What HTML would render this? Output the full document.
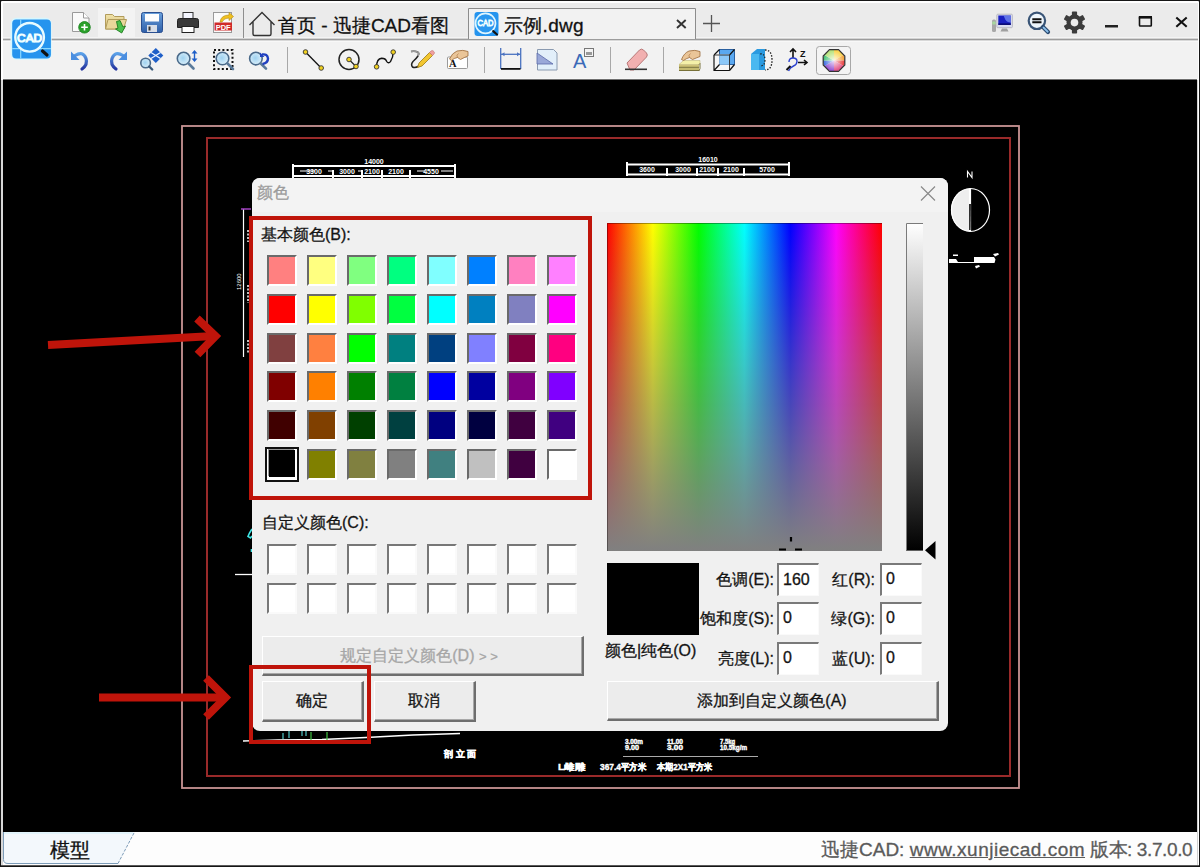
<!DOCTYPE html>
<html><head><meta charset="utf-8">
<style>
*{margin:0;padding:0;box-sizing:border-box}
html,body{width:1200px;height:867px;overflow:hidden;background:#161616;font-family:"Liberation Sans",sans-serif}
.a{position:absolute}
.t{position:absolute;white-space:nowrap;line-height:1;-webkit-text-stroke:0.3px currentColor}
.sw{position:absolute;width:30px;height:31px;border-style:solid;border-width:2px;border-color:#6a6a6a #fff #fff #6a6a6a}
.cs{position:absolute;width:30px;height:31px;background:#fff;border-style:solid;border-width:2px;border-color:#777 #fafafa #fafafa #777}
.btn{position:absolute;background:#ececec;border-style:solid;border-width:1px 2px 2px 1px;border-color:#fff #6e6e6e #6e6e6e #fff;box-shadow:inset -1px -1px 0 #a8a8a8}
.ed{position:absolute;width:41px;height:32px;background:#fff;border-style:solid;border-width:2px 1px 1px 2px;border-color:#7a7a7a #fafafa #fafafa #7a7a7a}
.dt{position:absolute;white-space:nowrap;line-height:1;font-size:16px;color:#141414;-webkit-text-stroke:0.3px currentColor}
</style></head><body>
<!-- window base -->
<div class="a" style="left:1px;top:1px;width:1198px;height:865px;background:#ffffff;border-radius:1px 1px 0 0"></div>
<div class="a" style="left:3px;top:3px;width:1195px;height:35px;background:#ebebeb;border-radius:0"></div>
<div class="a" style="left:3px;top:37px;width:1195px;height:1px;background:#f4f4f4"></div>
<div class="a" style="left:3px;top:38px;width:1195px;height:1px;background:#d4d4d4"></div>
<div class="a" style="left:3px;top:39px;width:1195px;height:1px;background:#9c9c9c"></div>
<div class="a" style="left:3px;top:40px;width:1195px;height:1px;background:#d8d8d8"></div>
<div class="a" style="left:3px;top:41px;width:1195px;height:1px;background:#f8f8f8"></div>
<div class="a" style="left:3px;top:42px;width:1195px;height:36px;background:#f2f2f2"></div>
<div class="a" style="left:3px;top:78px;width:1195px;height:1px;background:#f6f6f6"></div>
<div class="a" style="left:3px;top:79px;width:1194px;height:1px;background:#707070"></div>
<div class="a" style="left:3px;top:80px;width:1194px;height:752px;background:#000"></div>
<div class="a" style="left:1px;top:80px;width:2px;height:786px;background:#d8d8d8"></div>
<div class="a" style="left:1197px;top:80px;width:1px;height:786px;background:#cfcfcf"></div>
<div class="a" style="left:3px;top:832px;width:1194px;height:33px;background:#fdfdfd"></div>
<div class="a" style="left:1px;top:865px;width:1198px;height:1px;background:#5a5a5a"></div>
<svg class="a" style="left:0;top:0" width="1200" height="80" viewBox="0 0 1200 80">
<defs>
  <linearGradient id="gBlueArr" x1="0" y1="0" x2="0" y2="1"><stop offset="0" stop-color="#5aa0e8"/><stop offset="1" stop-color="#2536a0"/></linearGradient>
  <radialGradient id="gLens" cx="0.45" cy="0.45" r="0.6"><stop offset="0" stop-color="#9fd2f0"/><stop offset="1" stop-color="#dff1fb"/></radialGradient>
  <linearGradient id="gFolder" x1="0" y1="0" x2="0" y2="1"><stop offset="0" stop-color="#f0e2a8"/><stop offset="1" stop-color="#d9c17e"/></linearGradient>
  <linearGradient id="gSave" x1="0" y1="0" x2="0" y2="1"><stop offset="0" stop-color="#6aa0dc"/><stop offset="1" stop-color="#2f5fa8"/></linearGradient>
</defs>
<!-- folder hover bg -->
<rect x="98" y="8" width="37" height="29" fill="#f3f3f3"/>
<!-- new file -->
<path d="M72.5 12.5h11l5.5 5.5v13.5h-16.5z" fill="#fafafa" stroke="#9a9a9a" stroke-width="1"/>
<path d="M83.5 12.5v5.5h5.5" fill="#fff" stroke="#9a9a9a" stroke-width="1"/>
<circle cx="84.5" cy="27.3" r="5.8" fill="#2aa02a" stroke="#17801a" stroke-width="0.8"/>
<path d="M84.5 24v6.6M81.2 27.3h6.6" stroke="#fff" stroke-width="1.6"/>
<!-- open folder -->
<path d="M105.5 14.5h7l2 2h9.5v12.5h-18.5z" fill="url(#gFolder)" stroke="#b19b5b" stroke-width="1"/>
<path d="M108 19.5h18.5l-3 9.5h-18z" fill="#e9d79a" stroke="#b19b5b" stroke-width="1"/>
<path d="M116.5 21.5l3.5 -1l3 6.5l2.5 -1l-3.8 7l-6.2 -4l2.5 -0.8z" fill="#4cc04c" stroke="#1d7a1d" stroke-width="0.9"/>
<!-- save -->
<rect x="141.5" y="12.5" width="21" height="20" rx="2" fill="url(#gSave)" stroke="#2a4f90" stroke-width="1"/>
<rect x="145" y="14" width="14" height="7.5" fill="#fdfdfd"/>
<rect x="147" y="25" width="10" height="7" fill="#d8dee8"/>
<rect x="148.5" y="26.5" width="2" height="4" fill="#333"/>
<!-- print -->
<rect x="183" y="12.5" width="10" height="7" fill="#f4f6ff" stroke="#333" stroke-width="1"/>
<path d="M177.5 20.5q0-2 2-2h17q2 0 2 2v7h-21z" fill="#3a3a3a" stroke="#222" stroke-width="1"/>
<rect x="182" y="26.5" width="12" height="6" fill="#fff" stroke="#222" stroke-width="1"/>
<!-- pdf -->
<rect x="213.5" y="12.5" width="18" height="20" fill="#fbfbfb" stroke="#9a9a9a" stroke-width="1"/>
<rect x="214.5" y="22.5" width="17.5" height="8" fill="#d02a2a"/>
<text x="223.2" y="29.6" font-family="Liberation Sans" font-size="7.5" font-weight="bold" fill="#fff" text-anchor="middle">PDF</text>
<path d="M220 22q1-7 9-7v-2.5l4.5 4l-4.5 4v-2.5q-5 0-7 4z" fill="#f0c020" stroke="#b08a10" stroke-width="0.6"/>
<!-- separator -->
<rect x="243" y="8" width="1" height="30" fill="#8e8e8e"/>
<!-- home -->
<path d="M249.5 25L262 12.5L274.5 25M253 22v12q0 1.5 1.5 1.5h15q1.5 0 1.5-1.5v-12" fill="none" stroke="#333" stroke-width="1.4"/>
<!-- active tab -->
<path d="M468.5 39V8.5H695.5V39" fill="#f2f2f2" stroke="#8c8c8c" stroke-width="1"/>
<!-- tab close -->
<path d="M677 20l8.7 8M685.7 20l-8.7 8" stroke="#333" stroke-width="1.9"/>
<!-- plus -->
<path d="M711.5 15v17M703 23.5h17" stroke="#555" stroke-width="1.3"/>
<!-- right controls: monitor -->
<rect x="992" y="19.5" width="4" height="12.5" rx="1.5" fill="#a8a8a8"/>
<rect x="992.3" y="21.5" width="3.4" height="3" fill="#a8d8a0"/>
<rect x="996.8" y="14.2" width="15.6" height="13.5" rx="1" fill="#dadcf0" stroke="#b0b0b8" stroke-width="0.8"/>
<rect x="998.3" y="15.5" width="12.5" height="9.3" fill="#1a20c0"/>
<path d="M1003.5 15.5h7.3v7q-4 0-5.5-3z" fill="#7088f0" opacity="0.8"/>
<rect x="998.3" y="23.5" width="12.5" height="1.3" fill="#000060"/>
<path d="M1000.5 31.5h8l-1.5-3h-5z" fill="#a0a0a0"/>
<!-- search -->
<circle cx="1036.9" cy="20.8" r="8.2" fill="#eef6fc" stroke="#3a5577" stroke-width="2.2"/>
<path d="M1032.3 19.3h9.2M1032.3 22.3h9.2" stroke="#111" stroke-width="1.9"/>
<path d="M1043 27l5 5" stroke="#2a4a70" stroke-width="4.2" stroke-linecap="round"/>
<path d="M1043.6 27.6l4 4" stroke="#8cc0ec" stroke-width="2" stroke-linecap="round"/>
<!-- gear -->
<g transform="translate(1074.5,22.6)" fill="#3c3c3c">
  <circle r="8"/>
  <rect x="-2.6" y="-11" width="5.2" height="5" rx="0.8"/>
  <rect x="-2.6" y="6" width="5.2" height="5" rx="0.8" />
  <rect x="-2.6" y="-11" width="5.2" height="5" rx="0.8" transform="rotate(60)"/>
  <rect x="-2.6" y="-11" width="5.2" height="5" rx="0.8" transform="rotate(120)"/>
  <rect x="-2.6" y="-11" width="5.2" height="5" rx="0.8" transform="rotate(240)"/>
  <rect x="-2.6" y="-11" width="5.2" height="5" rx="0.8" transform="rotate(300)"/>
  <circle r="3.8" fill="#ececec"/>
</g>
<!-- min max close -->
<rect x="1105" y="25" width="13" height="2.5" fill="#222"/>
<rect x="1139.5" y="16.8" width="11.8" height="9.2" rx="0.8" fill="none" stroke="#111" stroke-width="1.6"/>
<rect x="1138.8" y="16" width="13.2" height="2.6" fill="#111"/>
<path d="M1176.3 17.5l10.4 9.2M1186.7 17.5l-10.4 9.2" stroke="#111" stroke-width="2.1"/>

<!-- ROW 2 -->
<!-- undo -->
<path d="M75 55.5q8-5 11 3q2 6-4 10.5" fill="none" stroke="url(#gBlueArr)" stroke-width="3.2" stroke-linecap="round"/>
<path d="M71 51.5v8.5h8.5z" fill="#4a8ee0"/>
<!-- redo -->
<path d="M123 55.5q-8-5-11 3q-2 6 4 10.5" fill="none" stroke="url(#gBlueArr)" stroke-width="3.2" stroke-linecap="round"/>
<path d="M127 51.5v8.5h-8.5z" fill="#4a8ee0"/>
<!-- pan -->
<path d="M155.8 48l7.5 7.5l-7.5 7.5l-7.5-7.5z" fill="#1f5fc8"/>
<path d="M151 52.5l9.5 6M160.5 52.5l-9.5 6" stroke="#eef4ff" stroke-width="1.3"/>
<circle cx="145.6" cy="63" r="4.8" fill="url(#gLens)" stroke="#4a6a8a" stroke-width="1.6"/>
<path d="M149.2 66.5l3 3" stroke="#3a5a7a" stroke-width="2.4" stroke-linecap="round"/>
<!-- zoom realtime -->
<circle cx="183.6" cy="58.6" r="6.3" fill="url(#gLens)" stroke="#4a6a8a" stroke-width="1.6"/>
<path d="M188.5 63.5l5 5" stroke="#5a7a9a" stroke-width="2.6" stroke-linecap="round"/>
<path d="M194.5 50l3 3.5h-6zM194.5 62l3-3.5h-6z" fill="#1f5fc8"/>
<rect x="193.8" y="52.5" width="1.4" height="7.5" fill="#1f5fc8"/>
<!-- zoom window -->
<rect x="214" y="50" width="18.5" height="19" fill="none" stroke="#111" stroke-width="2" stroke-dasharray="2 2.2"/>
<circle cx="222.5" cy="58.5" r="6.3" fill="url(#gLens)" stroke="#4a6a8a" stroke-width="1.6"/>
<path d="M227.5 63.5l5.5 5.5" stroke="#5a7a9a" stroke-width="2.6" stroke-linecap="round"/>
<!-- zoom prev -->
<circle cx="255.9" cy="58.6" r="6.3" fill="url(#gLens)" stroke="#4a6a8a" stroke-width="1.6"/>
<path d="M260.8 63.5l5.2 5.2" stroke="#5a7a9a" stroke-width="2.6" stroke-linecap="round"/>
<path d="M262 54.5q5.5-1 6 4q0 4.5-5.5 5.5" fill="none" stroke="#2040c0" stroke-width="2.4"/>
<path d="M260 52.5v4.5h4.5z" fill="#2040c0"/>
<!-- sep -->
<rect x="287" y="47" width="1" height="26" fill="#a8a8a8"/>
<!-- line -->
<path d="M305.5 52l15.7 16" stroke="#111" stroke-width="1.3"/>
<circle cx="305.5" cy="52" r="2.3" fill="#f0d020" stroke="#333" stroke-width="0.9"/>
<circle cx="321.2" cy="68" r="2.3" fill="#f0d020" stroke="#333" stroke-width="0.9"/>
<!-- circle -->
<circle cx="349" cy="59.5" r="10" fill="none" stroke="#222" stroke-width="1.5"/>
<path d="M349 59.5l7 7" stroke="#222" stroke-width="1.3"/>
<circle cx="349" cy="59.5" r="2.3" fill="#f0d020" stroke="#333" stroke-width="0.9"/>
<circle cx="356" cy="66.5" r="2.3" fill="#f0d020" stroke="#333" stroke-width="0.9"/>
<!-- spline -->
<path d="M376.6 66.8q0-8 5-8.5q4 0 5 3q2 3 4 0q2.6-4 2.6-9.2" fill="none" stroke="#111" stroke-width="1.4"/>
<circle cx="376.6" cy="66.8" r="2.3" fill="#f0d020" stroke="#333" stroke-width="0.9"/>
<circle cx="393.2" cy="52.1" r="2.3" fill="#f0d020" stroke="#333" stroke-width="0.9"/>
<!-- pencil -->
<path d="M411 51.5Q421 50.5 418 56Q416 59 413 61.5Q410.5 64.5 412.5 67Q415 68.5 419 66" fill="none" stroke="#222" stroke-width="1.5"/>
<path d="M411 51.5Q421 50.5 418 56" fill="none" stroke="#999" stroke-width="1.5"/>
<path d="M417.5 67.5l1.5-4.5l10.5-10.5l3 3l-10.5 10.5z" fill="#f2c630" stroke="#9a7a10" stroke-width="0.8"/>
<path d="M429.5 52.5l1.5-1.5q1.2-1 2.3 0l0.7 0.7q1 1.1 0 2.3l-1.5 1.5z" fill="#f0a0a0" stroke="#c07070" stroke-width="0.6"/>
<!-- text hand -->
<rect x="447.5" y="57" width="20" height="11.5" rx="1" fill="#fff" stroke="#9a9a9a" stroke-width="1"/>
<text x="449" y="67.2" font-family="Liberation Serif" font-size="10.5" font-weight="bold" fill="#111">A</text>
<path d="M449.5 59Q452 53 457 51Q463 49.5 468 51.5V56Q464 57.5 460.5 59.5L457.5 57.5Q454 58 451.5 60.5Z" fill="#eac598" stroke="#9a6a3a" stroke-width="0.8"/>
<path d="M457.5 57.5Q456 55 458.5 53.5" fill="none" stroke="#b07a48" stroke-width="0.7"/>
<!-- sep -->
<rect x="484" y="47" width="1" height="26" fill="#a8a8a8"/>
<!-- dimension -->
<path d="M500.7 48v21M520.7 48v21" stroke="#4a72c0" stroke-width="1.3"/>
<path d="M501 54.3h19.5" stroke="#4a72c0" stroke-width="1.3"/>
<path d="M501.5 54.3l3-2v4zM520 54.3l-3-2v4z" fill="#4a72c0"/>
<rect x="501" y="68" width="19.5" height="1.8" fill="#111"/>
<!-- table/page -->
<path d="M537.5 49.5h16l3.5 3.5v17h-19.5z" fill="#e2effa" stroke="#8a9ab0" stroke-width="1"/>
<path d="M537 53l16 11h-16z" fill="#9aa8d8" stroke="#5a6aa8" stroke-width="0.8"/>
<!-- text A -->
<text x="573" y="68" font-family="Liberation Sans" font-size="20" fill="#3a6ab8">A</text>
<rect x="584.5" y="48.5" width="9" height="8" fill="#f4f4f4" stroke="#777" stroke-width="1"/>
<rect x="586" y="52" width="6" height="3" fill="#999"/>
<!-- sep -->
<rect x="610" y="47" width="1" height="26" fill="#a8a8a8"/>
<!-- eraser -->
<path d="M627 63l12.5-13q2-1.8 4 0l3 3q1.6 2 0 4l-12.5 13h-4z" fill="#f2b0b0" stroke="#b87878" stroke-width="1"/>
<rect x="625" y="68.5" width="22" height="1.6" fill="#333"/>
<!-- sep -->
<rect x="663" y="47" width="1" height="26" fill="#a8a8a8"/>
<!-- layer -->
<path d="M679 64.5L683.5 60.5H700V63.5L699 64.5Z" fill="#f4f0a8" stroke="#b8b070" stroke-width="0.5"/>
<rect x="679" y="64.5" width="20" height="3" fill="#cdc278"/>
<rect x="679" y="67.5" width="20" height="3.3" fill="#c4ba70"/>
<path d="M679 67.3h20M679 70.5h20M699 64.5l1-1v5l-1 2.5" stroke="#6e6830" stroke-width="0.9" fill="none"/>
<path d="M681.5 59.5Q684 53 689 51Q695 49.5 700 51.5V56.5Q696 58 692.5 59.5L689.5 57.5Q686 58.5 683.5 60.5Z" fill="#eac598" stroke="#9a6a3a" stroke-width="0.8"/>
<path d="M689.5 57.5Q688 55 690.5 53.5" fill="none" stroke="#b07a48" stroke-width="0.7"/>
<!-- cube -->
<rect x="719.5" y="49.5" width="15" height="15" fill="#5aa8f0" stroke="#2a60a0" stroke-width="1"/>
<rect x="714" y="55" width="15.5" height="15.5" fill="#fff" fill-opacity="0.35" stroke="#fff" stroke-width="1"/>
<rect x="719.5" y="55" width="10" height="9.5" fill="#8cc8f8"/>
<path d="M714 55v15.5h15.5M714 70.5l5.5-6M729.5 70.5l5-6M714 55l5.5-5.5M729.5 55l5-5.5" fill="none" stroke="#111" stroke-width="1.2"/>
<path d="M714 55h15.5v15.5" fill="none" stroke="#222" stroke-width="0.9"/>
<!-- 3D -->
<path d="M751 54l6-5h8v21h-8l-6-4z" fill="#2a9ae0"/>
<path d="M751 54h8v16h-8z" fill="#4ab8f0"/>
<path d="M765 50q7 0 7 10q0 10-7 10" fill="none" stroke="#222" stroke-width="1.3" stroke-dasharray="1.5 1.5"/>
<path d="M760 54q5-1 5 6q0 6-5 6" fill="none" stroke="#222" stroke-width="1.2" stroke-dasharray="1.5 1.5"/>
<!-- UCS -->
<path d="M793 58v-8M790 52l3-3l3 3" fill="none" stroke="#111" stroke-width="1.6"/>
<text x="800" y="57" font-family="Liberation Sans" font-size="9" font-weight="bold" fill="#111">Z</text>
<path d="M798 62.5h8M804 60l3 2.5l-3 2.5" fill="none" stroke="#111" stroke-width="1.6"/>
<path d="M789 62q0-4 4-4q4 0 4 3.5q0 3-3.5 4.5q-3.5 1.5-5 5" fill="none" stroke="#2a40d0" stroke-width="1.4"/>
<path d="M786.5 70l4-4" stroke="#111" stroke-width="2"/>
<!-- color btn -->
<rect x="816.5" y="46.5" width="34" height="28" rx="3" fill="#f4f4f4" stroke="#a8a8a8" stroke-width="1"/>
<defs><radialGradient id="gWheel" cx="0.5" cy="0.5" r="0.5"><stop offset="0" stop-color="#fff" stop-opacity="0.85"/><stop offset="0.6" stop-color="#fff" stop-opacity="0.35"/><stop offset="1" stop-color="#fff" stop-opacity="0"/></radialGradient></defs>
<g transform="translate(834,60.5)">
  <path d="M0 0L0-11A11 11 0 0 1 9.53-5.5z" fill="#f8d040"/>
  <path d="M0 0L9.53-5.5A11 11 0 0 1 11 0z" fill="#f4a030"/>
  <path d="M0 0L11 0A11 11 0 0 1 9.53 5.5z" fill="#e83838"/>
  <path d="M0 0L9.53 5.5A11 11 0 0 1 0 11z" fill="#e04880"/>
  <path d="M0 0L0 11A11 11 0 0 1 -9.53 5.5z" fill="#9048d0"/>
  <path d="M0 0L-9.53 5.5A11 11 0 0 1 -11 0z" fill="#3a68e0"/>
  <path d="M0 0L-11 0A11 11 0 0 1 -9.53 -5.5z" fill="#40c070"/>
  <path d="M0 0L-9.53 -5.5A11 11 0 0 1 0 -11z" fill="#b0e070"/>
  <circle r="11" fill="url(#gWheel)"/>
  <path d="M-4.5-10.8L4.5-10.8L10.8-4.5L10.8 4.5L4.5 10.8L-4.5 10.8L-10.8 4.5L-10.8-4.5z" fill="none" stroke="#333" stroke-width="1.2"/>
</g>
<!-- logo -->
<rect x="10.5" y="17.7" width="41.2" height="42" rx="6" fill="#d6f7ff"/>
<rect x="12.2" y="19.6" width="38.7" height="38.8" rx="4" fill="#2594ee"/>
<path d="M20.7 19.6v38.8M12.2 48.7h38.7" stroke="#8ad8ff" stroke-width="1.2"/>
<circle cx="29.6" cy="37.3" r="14.3" fill="#2a98f0" stroke="#e8fbff" stroke-width="2.4"/>
<text x="29.6" y="41.6" font-family="Liberation Sans" font-size="11.5" fill="#2594ee" stroke="#f0ffff" stroke-width="1.2" text-anchor="middle" textLength="25" lengthAdjust="spacingAndGlyphs">CAD</text>
<path d="M42.5 51l4.5 4" stroke="#111" stroke-width="3.2" stroke-linecap="round"/>
<!-- tab icon -->
<rect x="474.5" y="12" width="24" height="24" rx="3" fill="#2594ee"/>
<circle cx="485.5" cy="23.3" r="10" fill="#2a98f0" stroke="#dff6ff" stroke-width="1.7"/>
<text x="485.5" y="26.2" font-family="Liberation Sans" font-size="8.5" fill="#2594ee" stroke="#f0ffff" stroke-width="0.9" text-anchor="middle" textLength="16" lengthAdjust="spacingAndGlyphs">CAD</text>
<path d="M493.2 31.2l3.8 3.3" stroke="#111" stroke-width="2.2" stroke-linecap="round"/>
</svg>
<div class="t" style="left:278px;top:16px;font-size:19px;color:#111">首页 - 迅捷CAD看图</div>
<div class="t" style="left:504px;top:16px;font-size:19px;color:#111;letter-spacing:0.3px">示例.dwg</div>
<svg class="a" style="left:0;top:0" width="1200" height="867" viewBox="0 0 1200 867">
  <rect x="182" y="126" width="837" height="662" fill="none" stroke="#c89494" stroke-width="1.8"/>
  <rect x="207" y="138" width="803" height="638" fill="none" stroke="#9a2a2a" stroke-width="2"/>
  <!-- top dims 1 -->
  <g stroke="#fff" stroke-width="2" fill="none">
    <path d="M293 166h162M293 176h162M293 164v14M455 164v14M333 170v8M362 170v8M382 170v8M410 170v8"/>
  </g>
  <g stroke="#fff" stroke-width="1" fill="none"><path d="M300 171h15M328 171h5M358 171h5M417 171h8M441 171h12"/></g>
  <g fill="#fff" font-family="Liberation Sans" font-size="7" font-weight="bold" text-anchor="middle">
    <text x="374" y="163.5">14000</text>
    <text x="314" y="173.5">3300</text><text x="347" y="173.5">3000</text><text x="372" y="173.5">2100</text><text x="396" y="173.5">2100</text><text x="431" y="173.5">4550</text>
  </g>
  <!-- top dims 2 -->
  <g stroke="#fff" stroke-width="2" fill="none">
    <path d="M627 164.5h162M627 174.5h162M627 162v14M789 162v14M667 168v8M697 168v8M718 168v8M744 168v8"/>
  </g>
  <g fill="#fff" font-family="Liberation Sans" font-size="7" font-weight="bold" text-anchor="middle">
    <text x="708" y="162">16010</text>
    <text x="647" y="171.5">3600</text><text x="683" y="171.5">3000</text><text x="707" y="171.5">2100</text><text x="731" y="171.5">2100</text><text x="767" y="171.5">5700</text>
  </g>
  <!-- left vertical dim -->
  <path d="M243.5 209v148" stroke="#fff" stroke-width="1.2"/>
  <path d="M241 209h10" stroke="#a040c0" stroke-width="1.5"/>
  <g fill="#fff" font-family="Liberation Sans" font-size="6">
    <text transform="translate(241,290) rotate(-90)">12600</text>
  </g>
  <path d="M248 230v12M248 285v18M248 340v14" stroke="#fff" stroke-width="1.5" stroke-dasharray="2 1.5"/>
  <!-- north arrow -->
  <path d="M967.5 177.5v-6l4.5 6v-6" fill="none" stroke="#fff" stroke-width="1.1"/>
  <path d="M970 188.5A19 21.5 0 0 0 970 231.5z" fill="#eeeeee"/>
  <ellipse cx="970.5" cy="210" rx="19" ry="21.5" fill="none" stroke="#fff" stroke-width="1.2"/>
  <path d="M970 188.5v43" stroke="#fff" stroke-width="2.2"/>
  <path d="M969.2 204l1.6 0l-0.3 26h-1.3z" fill="#000"/>
  <g fill="#fff">
    <path d="M949 259h7l2 3h16v-5h20l1.5 2.5l-1 3.5h-45.5z"/>
    <rect x="953" y="254.5" width="5" height="1.5"/>
    <path d="M993 254l5 -1l1 1.5l-4 2z"/>
    <path d="M975 266l4-1l1 1.5l-4 2z"/>
  </g>
  <!-- right small text -->
  <!-- bottom-left stuff -->
  <path d="M235 574.5h17" stroke="#fff" stroke-width="1.3"/>
  <path d="M252 529l-2.5 4l-1.5 3.5l2.5 1.5l1.5-2M251.5 549v3" fill="none" stroke="#40e8e8" stroke-width="1.6"/>
  <path d="M243 741L278 740L322 739.5L366 737.5L413 735L460 733.5" fill="none" stroke="#fff" stroke-width="1.4"/>
  <path d="M283 733v6M289 731v7M302 731v5M306 731v5" stroke="#50c8c8" stroke-width="1.2"/>
  <path d="M311 732v8M327 732v8" stroke="#40c040" stroke-width="1.2"/>
  <!-- bottom texts -->
  <g fill="#fff" font-family="Liberation Sans" font-weight="bold" stroke="#fff" stroke-width="0.4">
    <text x="444" y="757" font-size="9">剖 立 面</text>
    <text x="558" y="770" font-size="9" textLength="27" lengthAdjust="spacingAndGlyphs">L雌雕</text>
    <text x="600" y="770" font-size="9" textLength="46" lengthAdjust="spacingAndGlyphs">367.4平方米</text>
    <text x="657" y="770" font-size="9" textLength="55" lengthAdjust="spacingAndGlyphs">本期2X1平方米</text>
    <text x="625" y="743.5" font-size="6.5" textLength="18" lengthAdjust="spacingAndGlyphs">3.00m</text><text x="625" y="750" font-size="6.5" textLength="14" lengthAdjust="spacingAndGlyphs">9.00</text>
    <text x="667" y="743.5" font-size="6.5" textLength="16" lengthAdjust="spacingAndGlyphs">11.00</text><text x="667" y="750" font-size="6.5" textLength="16" lengthAdjust="spacingAndGlyphs">3.00</text>
    <text x="720" y="743.5" font-size="6.5" textLength="15" lengthAdjust="spacingAndGlyphs">7.5kg</text><text x="720" y="750" font-size="6.5" textLength="27" lengthAdjust="spacingAndGlyphs">10.5kg/m</text>
  </g>
  <path d="M623 756.5h135" stroke="#aaa" stroke-width="1.2"/>
</svg>
<div class="a" style="left:252px;top:178px;width:696px;height:553px;background:#f0f0f0;border-radius:8px"></div>
<div class="a" style="left:252px;top:178px;width:696px;height:34px;background:#f3f3f3;border-radius:8px 8px 0 0"></div>
<div class="dt" style="left:257px;top:185px;color:#9c9c9c">颜色</div>
<svg class="a" style="left:918px;top:184px" width="20" height="20"><path d="M3 2.5l14 14M17 2.5l-14 14" stroke="#8a8a8a" stroke-width="1.2"/></svg>
<div class="dt" style="left:261px;top:227px">基本颜色(B):</div>
<div class="sw" style="left:267px;top:255px;background:#FF8080"></div>
<div class="sw" style="left:307px;top:255px;background:#FFFF80"></div>
<div class="sw" style="left:347px;top:255px;background:#80FF80"></div>
<div class="sw" style="left:387px;top:255px;background:#00FF80"></div>
<div class="sw" style="left:427px;top:255px;background:#80FFFF"></div>
<div class="sw" style="left:467px;top:255px;background:#0080FF"></div>
<div class="sw" style="left:507px;top:255px;background:#FF80C0"></div>
<div class="sw" style="left:547px;top:255px;background:#FF80FF"></div>
<div class="sw" style="left:267px;top:294px;background:#FF0000"></div>
<div class="sw" style="left:307px;top:294px;background:#FFFF00"></div>
<div class="sw" style="left:347px;top:294px;background:#80FF00"></div>
<div class="sw" style="left:387px;top:294px;background:#00FF40"></div>
<div class="sw" style="left:427px;top:294px;background:#00FFFF"></div>
<div class="sw" style="left:467px;top:294px;background:#0080C0"></div>
<div class="sw" style="left:507px;top:294px;background:#8080C0"></div>
<div class="sw" style="left:547px;top:294px;background:#FF00FF"></div>
<div class="sw" style="left:267px;top:333px;background:#804040"></div>
<div class="sw" style="left:307px;top:333px;background:#FF8040"></div>
<div class="sw" style="left:347px;top:333px;background:#00FF00"></div>
<div class="sw" style="left:387px;top:333px;background:#008080"></div>
<div class="sw" style="left:427px;top:333px;background:#004080"></div>
<div class="sw" style="left:467px;top:333px;background:#8080FF"></div>
<div class="sw" style="left:507px;top:333px;background:#800040"></div>
<div class="sw" style="left:547px;top:333px;background:#FF0080"></div>
<div class="sw" style="left:267px;top:371px;background:#800000"></div>
<div class="sw" style="left:307px;top:371px;background:#FF8000"></div>
<div class="sw" style="left:347px;top:371px;background:#008000"></div>
<div class="sw" style="left:387px;top:371px;background:#008040"></div>
<div class="sw" style="left:427px;top:371px;background:#0000FF"></div>
<div class="sw" style="left:467px;top:371px;background:#0000A0"></div>
<div class="sw" style="left:507px;top:371px;background:#800080"></div>
<div class="sw" style="left:547px;top:371px;background:#8000FF"></div>
<div class="sw" style="left:267px;top:410px;background:#400000"></div>
<div class="sw" style="left:307px;top:410px;background:#804000"></div>
<div class="sw" style="left:347px;top:410px;background:#004000"></div>
<div class="sw" style="left:387px;top:410px;background:#004040"></div>
<div class="sw" style="left:427px;top:410px;background:#000080"></div>
<div class="sw" style="left:467px;top:410px;background:#000040"></div>
<div class="sw" style="left:507px;top:410px;background:#400040"></div>
<div class="sw" style="left:547px;top:410px;background:#400080"></div>
<div class="a" style="left:265px;top:447px;width:34px;height:35px;border:2px solid #111;background:#fff"></div>
<div class="a" style="left:269px;top:450px;width:26px;height:27px;background:#000000;box-shadow:-1px -1px 0 #999"></div>
<div class="sw" style="left:307px;top:449px;background:#808000"></div>
<div class="sw" style="left:347px;top:449px;background:#808040"></div>
<div class="sw" style="left:387px;top:449px;background:#808080"></div>
<div class="sw" style="left:427px;top:449px;background:#408080"></div>
<div class="sw" style="left:467px;top:449px;background:#C0C0C0"></div>
<div class="sw" style="left:507px;top:449px;background:#400040"></div>
<div class="sw" style="left:547px;top:449px;background:#FFFFFF"></div>
<div class="dt" style="left:262px;top:515px">自定义颜色(C):</div>
<div class="cs" style="left:267px;top:544px"></div>
<div class="cs" style="left:307px;top:544px"></div>
<div class="cs" style="left:347px;top:544px"></div>
<div class="cs" style="left:387px;top:544px"></div>
<div class="cs" style="left:427px;top:544px"></div>
<div class="cs" style="left:467px;top:544px"></div>
<div class="cs" style="left:507px;top:544px"></div>
<div class="cs" style="left:547px;top:544px"></div>
<div class="cs" style="left:267px;top:583px"></div>
<div class="cs" style="left:307px;top:583px"></div>
<div class="cs" style="left:347px;top:583px"></div>
<div class="cs" style="left:387px;top:583px"></div>
<div class="cs" style="left:427px;top:583px"></div>
<div class="cs" style="left:467px;top:583px"></div>
<div class="cs" style="left:507px;top:583px"></div>
<div class="cs" style="left:547px;top:583px"></div>
<div class="btn" style="left:262px;top:636px;width:322px;height:40px"></div>
<div class="dt" style="left:258px;top:648px;width:322px;text-align:center;color:#a6a6a6">规定自定义颜色(D) <span style="font-size:13px">&gt; &gt;</span></div>
<div class="btn" style="left:262px;top:681px;width:102px;height:41px"></div>
<div class="dt" style="left:262px;top:693px;width:100px;text-align:center">确定</div>
<div class="btn" style="left:374px;top:681px;width:102px;height:41px"></div>
<div class="dt" style="left:374px;top:693px;width:100px;text-align:center">取消</div>
<div class="btn" style="left:607px;top:681px;width:332px;height:40px"></div>
<div class="dt" style="left:607px;top:693px;width:330px;text-align:center">添加到自定义颜色(A)</div>
<svg class="a" style="left:607px;top:223px" width="275" height="328" viewBox="0 0 275 328" preserveAspectRatio="none">
<defs>
<linearGradient id="hue" x1="0" y1="0" x2="1" y2="0">
<stop offset="0" stop-color="#ff0000"/><stop offset="0.1667" stop-color="#ffff00"/><stop offset="0.3333" stop-color="#00ff00"/>
<stop offset="0.5" stop-color="#00ffff"/><stop offset="0.6667" stop-color="#0000ff"/><stop offset="0.8333" stop-color="#ff00ff"/><stop offset="1" stop-color="#ff0000"/>
</linearGradient>
<linearGradient id="sat" x1="0" y1="0" x2="0" y2="1"><stop offset="0" stop-color="#808080" stop-opacity="0"/><stop offset="1" stop-color="#808080" stop-opacity="1"/></linearGradient>
</defs>
<rect width="275" height="328" fill="url(#hue)"/>
<rect width="275" height="328" fill="url(#sat)"/>
<path d="M0.5 328V0.5H275" fill="none" stroke="#000" stroke-opacity="0.35" stroke-width="1"/>
<path d="M184 314v4.5M172 326.5h7M188 326.5h7" stroke="#000" stroke-width="2.2"/>
</svg>
<svg class="a" style="left:900px;top:218px" width="44" height="346"><defs><linearGradient id="lum" x1="0" y1="0" x2="0" y2="1"><stop offset="0" stop-color="#fff"/><stop offset="1" stop-color="#000"/></linearGradient></defs>
<rect x="6" y="5" width="17" height="327.6" fill="url(#lum)"/>
<path d="M6.5 332.6V5.5H23" fill="none" stroke="#7a7a7a" stroke-width="1"/>
<path d="M25 332.2l10.5-9.2v18.4z" fill="#000"/></svg>
<div class="a" style="left:607px;top:563px;width:92px;height:72px;background:#000"></div>
<div class="dt" style="left:605px;top:643px">颜色|纯色(O)</div>
<div class="dt" style="left:680px;top:572px;width:94px;text-align:right">色调(E):</div>
<div class="ed" style="left:777px;top:563px;width:42px;height:33px"></div>
<div class="dt" style="left:783px;top:572px">160</div>
<div class="dt" style="left:680px;top:611px;width:94px;text-align:right">饱和度(S):</div>
<div class="ed" style="left:777px;top:602px;width:42px;height:33px"></div>
<div class="dt" style="left:783px;top:610px">0</div>
<div class="dt" style="left:680px;top:651px;width:94px;text-align:right">亮度(L):</div>
<div class="ed" style="left:777px;top:642px;width:42px;height:33px"></div>
<div class="dt" style="left:783px;top:650px">0</div>
<div class="dt" style="left:800px;top:572px;width:75px;text-align:right">红(R):</div>
<div class="ed" style="left:880px;top:563px;width:42px;height:33px"></div>
<div class="dt" style="left:886px;top:571px">0</div>
<div class="dt" style="left:800px;top:611px;width:75px;text-align:right">绿(G):</div>
<div class="ed" style="left:880px;top:602px;width:42px;height:33px"></div>
<div class="dt" style="left:886px;top:610px">0</div>
<div class="dt" style="left:800px;top:651px;width:75px;text-align:right">蓝(U):</div>
<div class="ed" style="left:880px;top:642px;width:42px;height:33px"></div>
<div class="dt" style="left:886px;top:650px">0</div>
<!-- status bar -->
<svg class="a" style="left:0;top:830px" width="200" height="37"><path d="M3.5 2v27.5q0 4 4.5 4h110l16.5-31.5" fill="#f3f8fc" stroke="none"/><path d="M3.5 2v27.5q0 4 4.5 4h110" fill="none" stroke="#7d9cb8" stroke-width="1"/><path d="M118 33.5l16.5-31.5" fill="none" stroke="#7d9cb8" stroke-width="1" stroke-dasharray="3 1.5"/><path d="M4 3h129" stroke="#e2f4fb" stroke-width="2"/></svg>
<div class="t" style="left:50px;top:840px;font-size:20px;color:#111">模型</div>
<div class="t" style="left:821px;top:840px;font-size:19px;color:#5a5a5a">迅捷CAD: <span style="text-decoration:underline;letter-spacing:0.5px">www.xunjiecad.com</span><span style="letter-spacing:-0.4px"> 版本: 3.7.0.0</span></div>
<!-- annotations -->
<svg class="a" style="left:0;top:0" width="1200" height="867">
  <g fill="none" stroke="#bf140a" stroke-linecap="butt">
    <rect x="251" y="218" width="339" height="280" stroke-width="4"/>
    <rect x="251" y="667" width="118" height="75" stroke-width="4"/>
    <path d="M48 345L214 336" stroke-width="8"/>
    <path d="M197 318.5L215.5 336L197.5 354.5" stroke-width="8"/>
    <path d="M99 697.5h124" stroke-width="8"/>
    <path d="M206 678L225.5 697.5L206 717" stroke-width="8"/>
  </g>
</svg>
</body></html>
